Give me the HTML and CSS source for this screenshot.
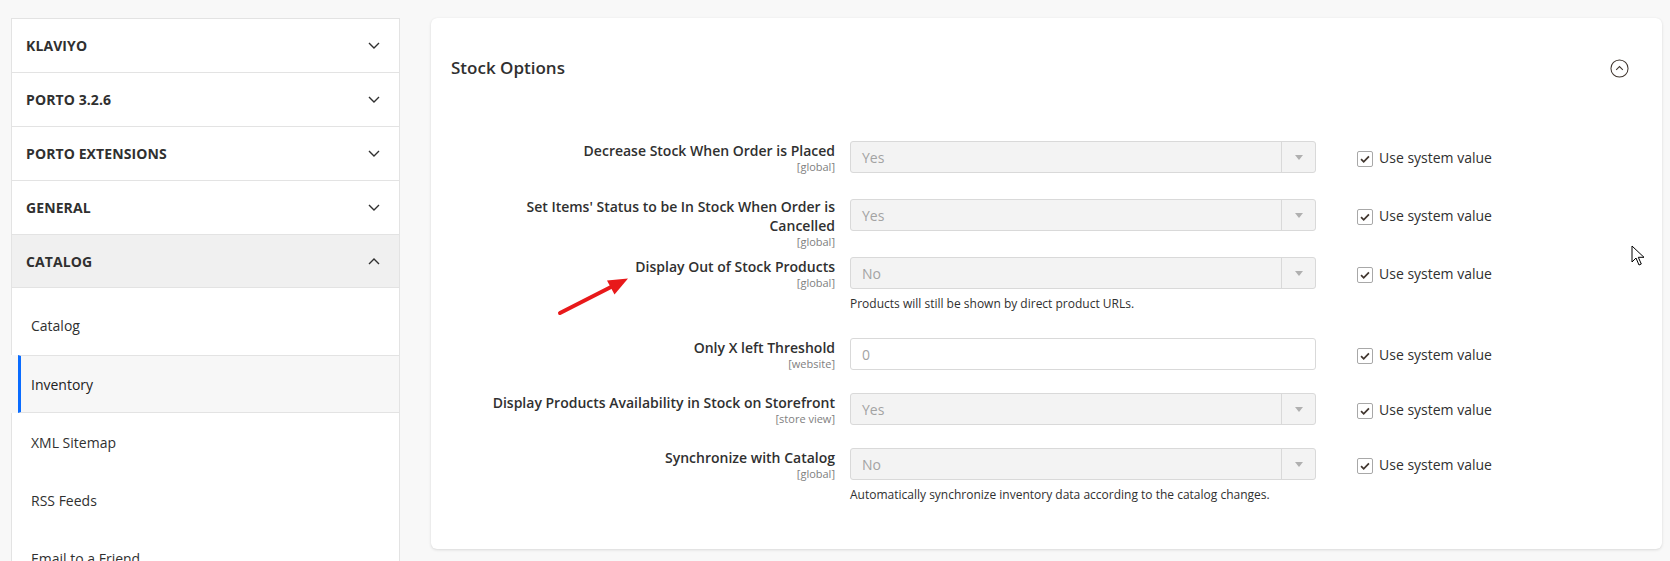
FILE: index.html
```html
<!DOCTYPE html>
<html lang="en">
<head>
<meta charset="utf-8">
<title>Inventory configuration</title>
<link rel="stylesheet" href="styles.css">
</head>
<body>
<div class="page">
  <aside class="nav">
    <div class="nav-title"><span>KLAVIYO</span><svg class="chev" viewBox="0 0 12 7"><path d="M1 1l5 5 5-5"/></svg></div>
    <div class="nav-title"><span>PORTO 3.2.6</span><svg class="chev" viewBox="0 0 12 7"><path d="M1 1l5 5 5-5"/></svg></div>
    <div class="nav-title"><span>PORTO EXTENSIONS</span><svg class="chev" viewBox="0 0 12 7"><path d="M1 1l5 5 5-5"/></svg></div>
    <div class="nav-title"><span>GENERAL</span><svg class="chev" viewBox="0 0 12 7"><path d="M1 1l5 5 5-5"/></svg></div>
    <div class="nav-title nav-title--open"><span>CATALOG</span><svg class="chev" viewBox="0 0 12 7"><path d="M1 6l5-5 5 5"/></svg></div>
    <ul class="nav-items">
      <li class="nav-item nav-item--first">Catalog</li>
      <li class="nav-item nav-item--active">Inventory</li>
      <li class="nav-item">XML Sitemap</li>
      <li class="nav-item">RSS Feeds</li>
      <li class="nav-item">Email to a Friend</li>
    </ul>
  </aside>

  <main class="panel">
    <div class="panel-head">
      <h2 class="panel-title">Stock Options</h2>
      <svg class="toggle" viewBox="0 0 20 20"><circle cx="10" cy="10" r="9"/><path d="M6.5 11.5l3.5-3.5 3.5 3.5"/></svg>
    </div>

    <div class="form">
      <div class="row row--58">
        <div class="label">Decrease Stock When Order is Placed<span class="scope">[global]</span></div>
        <div class="control">
          <div class="select"><span class="value">Yes</span><span class="caret"></span></div>
        </div>
        <div class="use-default"><span class="check"><svg viewBox="0 0 16 16"><path d="M3.5 8.2l3 3 6-6.2"/></svg></span>Use system value</div>
      </div>

      <div class="row row--58">
        <div class="label label--wrap">Set Items' Status to be In Stock When Order is Cancelled<span class="scope">[global]</span></div>
        <div class="control">
          <div class="select"><span class="value">Yes</span><span class="caret"></span></div>
        </div>
        <div class="use-default"><span class="check"><svg viewBox="0 0 16 16"><path d="M3.5 8.2l3 3 6-6.2"/></svg></span>Use system value</div>
      </div>

      <div class="row row--81">
        <div class="label">Display Out of Stock Products<span class="scope">[global]</span></div>
        <div class="control">
          <div class="select"><span class="value">No</span><span class="caret"></span></div>
          <div class="note">Products will still be shown by direct product URLs.</div>
        </div>
        <div class="use-default"><span class="check"><svg viewBox="0 0 16 16"><path d="M3.5 8.2l3 3 6-6.2"/></svg></span>Use system value</div>
      </div>

      <div class="row row--55">
        <div class="label">Only X left Threshold<span class="scope">[website]</span></div>
        <div class="control">
          <div class="input"><span class="value">0</span></div>
        </div>
        <div class="use-default"><span class="check"><svg viewBox="0 0 16 16"><path d="M3.5 8.2l3 3 6-6.2"/></svg></span>Use system value</div>
      </div>

      <div class="row row--55">
        <div class="label">Display Products Availability in Stock on Storefront<span class="scope">[store view]</span></div>
        <div class="control">
          <div class="select"><span class="value">Yes</span><span class="caret"></span></div>
        </div>
        <div class="use-default"><span class="check"><svg viewBox="0 0 16 16"><path d="M3.5 8.2l3 3 6-6.2"/></svg></span>Use system value</div>
      </div>

      <div class="row">
        <div class="label">Synchronize with Catalog<span class="scope">[global]</span></div>
        <div class="control">
          <div class="select"><span class="value">No</span><span class="caret"></span></div>
          <div class="note">Automatically synchronize inventory data according to the catalog changes.</div>
        </div>
        <div class="use-default"><span class="check"><svg viewBox="0 0 16 16"><path d="M3.5 8.2l3 3 6-6.2"/></svg></span>Use system value</div>
      </div>
    </div>
  </main>
</div>

<svg class="annot-arrow" viewBox="0 0 80 50"><path class="shaft" d="M5 43L56 17"/><path class="head" d="M73 8.5L59.5 24.5 52 10.5z"/></svg>
<svg class="cursor" viewBox="0 0 13 21"><path d="M1 1v16l4-4 3 7 2.3-1-3-6.7H13z"/></svg>
</body>
</html>
```

FILE: styles.css
```css
* { box-sizing: border-box; }

html, body {
  margin: 0;
  padding: 0;
}

body {
  background: #f8f8f8;
  font-family: "Open Sans", "Liberation Sans", sans-serif;
  color: #303030;
  width: 1670px;
  height: 561px;
  overflow: hidden;
  position: relative;
}

.page {
  display: flex;
  align-items: flex-start;
  gap: 31px;
  padding: 18px 8px 0 11px;
}

/* ---------- sidebar ---------- */
.nav {
  width: 389px;
  flex: none;
}

.nav-title {
  display: flex;
  align-items: center;
  justify-content: space-between;
  height: 54px;
  padding: 0 19px 0 14px;
  background: #fff;
  border: 1px solid #e3e3e3;
  border-bottom: none;
  font-size: 14px;
  font-weight: 700;
  color: #303030;
  letter-spacing: 0.1px;
}

.nav-title--open {
  background: #f0f0f0;
  border-bottom: 1px solid #e3e3e3;
}

.chev {
  width: 12px;
  height: 7px;
  fill: none;
  stroke: #303030;
  stroke-width: 1.4;
}

.nav-items {
  list-style: none;
  margin: 0;
  padding: 0;
}

.nav-item {
  height: 58px;
  display: flex;
  align-items: center;
  padding-left: 19px;
  background: #fff;
  border-left: 1px solid #e3e3e3;
  border-right: 1px solid #e3e3e3;
  font-size: 14px;
  color: #303030;
}

.nav-item--first {
  height: 67px;
  padding-top: 8px;
}

.nav-item--active {
  margin-left: 7px;
  padding-left: 10px;
  background: #f7f7f7;
  border-left: 3px solid #0a6cff;
  border-top: 1px solid #e3e3e3;
  border-bottom: 1px solid #e3e3e3;
  color: #222;
}

/* ---------- panel ---------- */
.panel {
  flex: 1;
  background: #fff;
  border-radius: 6px;
  box-shadow: 0 1px 3px rgba(0, 0, 0, 0.12), 0 0 1px rgba(0, 0, 0, 0.06);
  padding: 38px 34px 47px 20px;
}

.panel-head {
  display: flex;
  align-items: center;
  justify-content: space-between;
  height: 23px;
}

.panel-title {
  margin: 0;
  font-size: 17px;
  font-weight: 600;
  line-height: 23px;
  color: #303030;
}

.toggle {
  width: 19px;
  height: 19px;
  fill: none;
  stroke: #41362f;
  stroke-width: 1.1;
  margin-right: -0.5px;
  margin-top: 2px;
}

.form {
  margin-top: 62px;
  display: flex;
  flex-direction: column;
}

.row {
  display: grid;
  grid-template-columns: 399px 466px 1fr;
  align-items: start;
}

.row--58 { height: 58px; }
.row--81 { height: 81px; }
.row--55 { height: 55px; }

.label {
  padding: 0 15px 0 39px;
  text-align: right;
  font-size: 14px;
  font-weight: 600;
  line-height: 19px;
  color: #303030;
}

.label--wrap {
  margin-top: -2px;
}

.scope {
  display: block;
  font-size: 11px;
  font-weight: 400;
  line-height: 14px;
  color: #808080;
}

.control {
  display: flex;
  flex-direction: column;
}

.select,
.input {
  height: 32px;
  display: flex;
  align-items: center;
  border: 1px solid #d9d9d9;
  border-radius: 3px;
  background: #f3f3f3;
  font-size: 14px;
}

.input {
  background: #fff;
}

.value {
  flex: 1;
  padding-left: 11px;
  color: #a3a3a3;
}

.caret {
  width: 34px;
  height: 100%;
  border-left: 1px solid #d9d9d9;
  display: flex;
  align-items: center;
  justify-content: center;
}

.caret::after {
  content: "";
  border-left: 4px solid transparent;
  border-right: 4px solid transparent;
  border-top: 5px solid #b0b0b0;
}

.note {
  margin-top: 7px;
  font-size: 12px;
  line-height: 15px;
  color: #303030;
}

.use-default {
  display: flex;
  align-items: center;
  gap: 6px;
  margin-left: 41px;
  padding-top: 7px;
  font-size: 14px;
  line-height: 19px;
  color: #303030;
}

.check {
  width: 16px;
  height: 16px;
  border: 1px solid #a8a8a8;
  border-radius: 2px;
  background: #fff;
  display: flex;
  margin-top: 3px;
}

.check svg {
  width: 14px;
  height: 14px;
  fill: none;
  stroke: #41362f;
  stroke-width: 2;
}

/* ---------- overlays ---------- */
.annot-arrow {
  position: absolute;
  left: 555px;
  top: 270px;
  width: 80px;
  height: 50px;
}

.annot-arrow .shaft {
  stroke: #e8191a;
  stroke-width: 4;
  stroke-linecap: round;
  fill: none;
}

.annot-arrow .head {
  fill: #e8191a;
}

.cursor {
  position: absolute;
  left: 1631px;
  top: 245px;
  width: 13px;
  height: 21px;
}

.cursor path {
  fill: #fff;
  stroke: #000;
  stroke-width: 1;
  stroke-linejoin: miter;
}
```
